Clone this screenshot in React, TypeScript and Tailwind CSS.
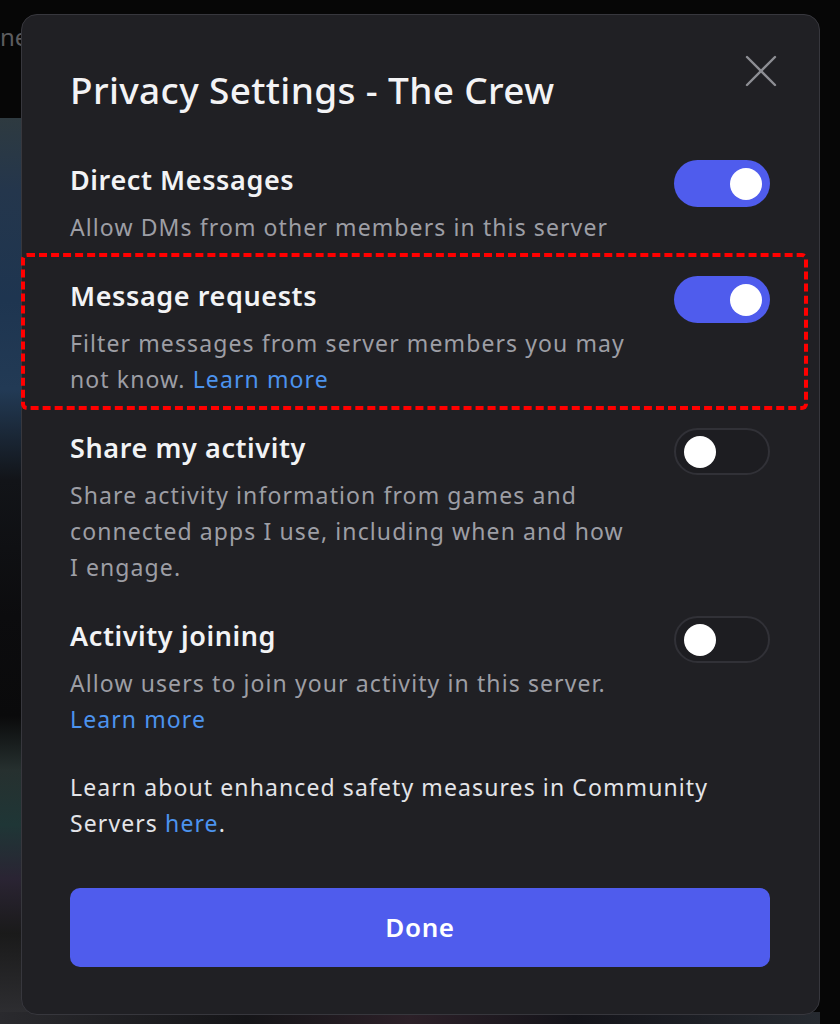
import React from 'react';

interface SettingRow {
  title: string;
  lines: React.ReactNode[];
  enabled: boolean;
  highlighted?: boolean;
}

const Link: React.FC<{ children: React.ReactNode }> = ({ children }) => (
  <span className="text-[#4c93ee]">{children}</span>
);

const rows: SettingRow[] = [
  {
    title: 'Direct Messages',
    lines: ['Allow DMs from other members in this server'],
    enabled: true,
  },
  {
    title: 'Message requests',
    lines: [
      'Filter messages from server members you may',
      <>
        not know. <Link>Learn more</Link>
      </>,
    ],
    enabled: true,
    highlighted: true,
  },
  {
    title: 'Share my activity',
    lines: [
      'Share activity information from games and',
      'connected apps I use, including when and how',
      'I engage.',
    ],
    enabled: false,
  },
  {
    title: 'Activity joining',
    lines: ['Allow users to join your activity in this server.', <Link>Learn more</Link>],
    enabled: false,
  },
];

const Toggle: React.FC<{ on: boolean }> = ({ on }) =>
  on ? (
    <div className="flex h-[47px] w-[96px] shrink-0 items-center justify-end rounded-full bg-[#4f5ced] pr-[8px]">
      <div className="h-[32px] w-[32px] rounded-full bg-white" />
    </div>
  ) : (
    <div className="flex h-[47px] w-[96px] shrink-0 items-center justify-start rounded-full border-2 border-[#313137] bg-[#1d1d21] pl-[8px]">
      <div className="h-[32px] w-[32px] rounded-full bg-white" />
    </div>
  );

const CloseIcon = () => (
  <svg width="32" height="32" viewBox="0 0 32 32" fill="none" stroke="#8d8e94" strokeWidth="2.4" strokeLinecap="round">
    <line x1="2" y1="2" x2="30" y2="30" />
    <line x1="30" y1="2" x2="2" y2="30" />
  </svg>
);

export default function App() {
  return (
    <div className="relative h-[1024px] w-[840px] overflow-hidden bg-[#060606] font-['Noto_Sans',sans-serif]">
      {/* blurred app content behind the modal */}
      <div className="absolute left-0 top-[19px] text-[24px] text-[#5c5c5e]">ne</div>
      <div className="absolute bottom-0 left-0 top-[118px] w-[30px] bg-[linear-gradient(180deg,#2e3a40_0%,#24364c_8%,#1e3550_20%,#223a55_30%,#121418_40%,#0c0c0e_55%,#0a0a0b_66%,#26302f_72%,#1f3636_78%,#2a2433_84%,#1a1a1a_90%,#303034_100%)]" />
      <div className="absolute bottom-0 left-0 right-[20px] h-[12px] bg-[linear-gradient(90deg,#2a2a2e_0%,#151518_30%,#2c2028_50%,#14141a_70%,#262a30_100%)]" />

      <div className="relative pl-[21px] pt-[14px]">
        <div className="flex h-[1001px] w-[799px] flex-col rounded-[16px] border border-[#37373d] bg-[#202024] pl-12 pr-[49px] pt-[51px]">
          <div className="flex items-start justify-between">
            <h1 className="h-[48px] text-[37px] font-medium leading-[48px] tracking-[0.35px] text-[#f3f3f5]">
              Privacy Settings - The Crew
            </h1>
            <div className="-mr-[7px] -mt-[11px]">
              <CloseIcon />
            </div>
          </div>

          <div className="mt-[48px] flex flex-col gap-[33px]">
            {rows.map((row) => (
              <div key={row.title} className="relative flex items-start justify-between">
                {row.highlighted && (
                  <div className="pointer-events-none absolute -bottom-[13px] -left-[49px] -right-[38px] -top-[25px] rounded-[6px] border-4 border-dashed border-[#ff0000]" />
                )}
                <div className="flex flex-col">
                  <div className="text-[27px] font-semibold leading-[36px] tracking-[0.6px] text-[#f2f3f5]">
                    {row.title}
                  </div>
                  <div className="mt-[11px] text-[23px] leading-[36px] tracking-[1.1px] text-[#9d9ea5]">
                    {row.lines.map((line, i) => (
                      <div key={i}>{line}</div>
                    ))}
                  </div>
                </div>
                <div className="-mt-[2px]">
                  <Toggle on={row.enabled} />
                </div>
              </div>
            ))}
          </div>

          <div className="mt-[32px] text-[23px] leading-[36px] tracking-[1.1px] text-[#e3e4e8]">
            <div>Learn about enhanced safety measures in Community</div>
            <div>
              Servers <Link>here</Link>.
            </div>
          </div>

          <button className="mt-[47px] h-[79px] w-full rounded-[10px] bg-[#4f5ced] text-[26px] font-semibold tracking-[0.6px] text-white">
            Done
          </button>
        </div>
      </div>
    </div>
  );
}
